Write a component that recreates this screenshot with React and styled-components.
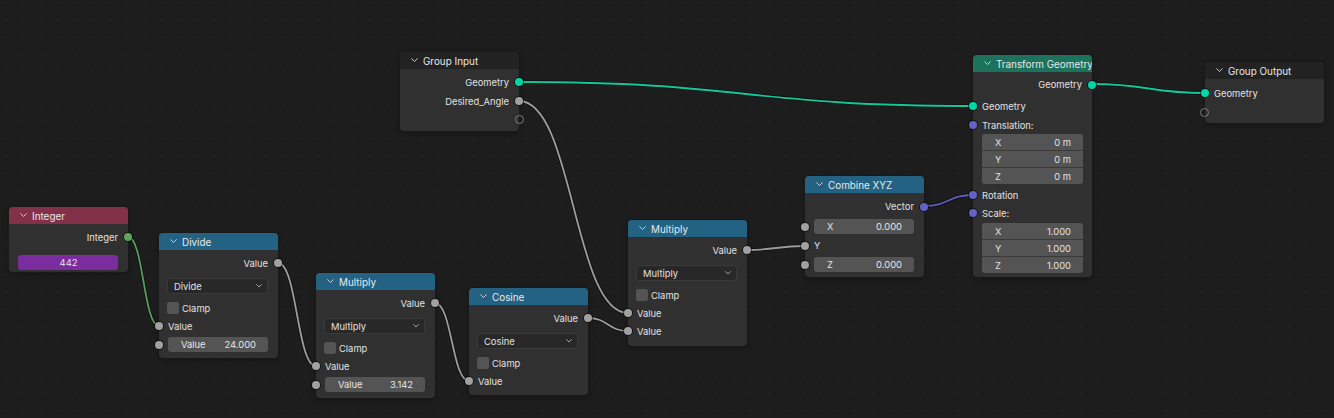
import React from "react";
import styled, { createGlobalStyle } from "styled-components";

const GlobalStyle = createGlobalStyle`
  html, body {
    margin: 0;
    padding: 0;
    background: #1d1d1d;
  }
  body {
    font-family: Inter, "Noto Sans", "DejaVu Sans", sans-serif;
    -webkit-font-smoothing: antialiased;
  }
`;

const SOCKET = {
  float: "#a1a1a1",
  int: "#5fa55f",
  geo: "#00d6a3",
  vec: "#6363c7",
};

const LINK = {
  float: "#9c9c9c",
  int: "#5a9a5a",
  geo: "#14c79a",
  vec: "#5e5ec0",
};

const Canvas = styled.div`
  position: relative;
  width: 1334px;
  height: 418px;
  overflow: hidden;
  background-color: #1d1d1d;
  background-image: radial-gradient(circle, #272727 0.9px, transparent 1.1px);
  background-size: 17.33px 17px;
  background-position: -2.6px -5.5px;
`;

const Wires = styled.svg`
  position: absolute;
  left: 0;
  top: 0;
`;

const Node = styled.div`
  position: absolute;
  left: ${(p) => p.$x}px;
  top: ${(p) => p.$y}px;
  width: 119px;
  background: #303030;
  border-radius: 4px;
  box-shadow: 0 0 0 1px #191919, 0 2px 5px rgba(0, 0, 0, 0.35);
  padding-bottom: ${(p) => p.$pb || 0}px;
  color: #e2e2e2;
  font-size: 9.4px;
`;

const Header = styled.div`
  height: 17px;
  display: flex;
  align-items: center;
  gap: 5px;
  padding-left: 11px;
  background: ${(p) => p.$color};
  border-radius: 4px 4px 0 0;
  font-size: 9.9px;
  color: #e8e8e8;
  margin-bottom: 3px;
  white-space: nowrap;
  overflow: hidden;

  svg {
    flex-shrink: 0;
  }
`;

const Row = styled.div`
  position: relative;
  height: ${(p) => p.$h}px;
  display: flex;
  align-items: center;
  justify-content: ${(p) => (p.$out ? "flex-end" : "flex-start")};
  padding: 0 10px 0 9px;
`;

const FieldRow = styled.div`
  position: relative;
  height: ${(p) => p.$h}px;
  display: flex;
  align-items: ${(p) => (p.$bottom ? "flex-end" : "center")};
  padding: 0 10px 0 9px;
  padding-bottom: ${(p) => (p.$bottom ? 2 : 0)}px;
`;

const Socket = styled.span`
  position: absolute;
  top: 50%;
  ${(p) => (p.$out ? `right: ${p.$hollow ? -5 : -4}px;` : `left: ${p.$hollow ? -5 : -4}px;`)}
  width: ${(p) => (p.$hollow ? 9 : 8)}px;
  height: ${(p) => (p.$hollow ? 9 : 8)}px;
  margin-top: ${(p) => (p.$hollow ? -4.5 : -4)}px;
  border-radius: 50%;
  box-sizing: border-box;
  background: ${(p) => (p.$hollow ? "transparent" : p.$color)};
  border: ${(p) => (p.$hollow ? "1.3px solid #7d7d7d" : "none")};
  box-shadow: ${(p) => (p.$hollow ? "none" : "0 0 0 1px rgba(0,0,0,0.55)")};
`;

const Field = styled.div`
  flex: 1;
  height: 15px;
  border-radius: 3px;
  background: ${(p) => p.$bg || "#545454"};
  display: flex;
  align-items: center;
  justify-content: ${(p) => (p.$center ? "center" : "space-between")};
  padding: 0 12px 0 13px;
  color: #e6e6e6;
`;

const Dropdown = styled.div`
  flex: 1;
  height: 16px;
  margin-left: -1px;
  box-sizing: border-box;
  border-radius: 3px;
  background: #282828;
  border: 1px solid #3a3a3a;
  display: flex;
  align-items: center;
  justify-content: space-between;
  padding: 0 5px 0 6px;
`;

const Check = styled.span`
  width: 12px;
  height: 12px;
  margin-left: -1px;
  border-radius: 2px;
  background: #545454;
  margin-right: 3px;
`;

const VectorBlock = styled.div`
  margin: ${(p) => p.$mt}px 9px 0 9px;
  border-radius: 3px;
  overflow: hidden;
  display: flex;
  flex-direction: column;
  gap: 1px;
  background: #3a3a3a;
`;

const VectorCell = styled.div`
  height: 16px;
  background: #545454;
  display: flex;
  align-items: center;
  justify-content: space-between;
  padding: 0 12px 0 13px;
`;

const Chevron = ({ size = 7, color = "#d0d0d0" }) => (
  <svg width={size} height={size * 0.6} viewBox="0 0 10 6">
    <polyline
      points="1,1 5,5 9,1"
      fill="none"
      stroke={color}
      strokeWidth="1.4"
      strokeLinecap="round"
      strokeLinejoin="round"
    />
  </svg>
);

const Title = ({ color, children }) => (
  <Header $color={color}>
    <Chevron />
    <span>{children}</span>
  </Header>
);

const Out = ({ h = 20, type = "float", children }) => (
  <Row $h={h} $out>
    {children}
    <Socket $out $color={SOCKET[type]} />
  </Row>
);

const In = ({ h = 18, type = "float", children }) => (
  <Row $h={h}>
    {children}
    <Socket $color={SOCKET[type]} />
  </Row>
);

const ValueIn = ({ label, value, h = 19 }) => (
  <FieldRow $h={h}>
    <Socket $color={SOCKET.float} />
    <Field>
      <span>{label}</span>
      <span>{value}</span>
    </Field>
  </FieldRow>
);

const Select = ({ label }) => (
  <Row $h={26}>
    <Dropdown>
      <span>{label}</span>
      <Chevron size={6} color="#bdbdbd" />
    </Dropdown>
  </Row>
);

const Clamp = () => (
  <Row $h={18}>
    <Check />
    <span>Clamp</span>
  </Row>
);

const Vector = ({ mt, values }) => (
  <VectorBlock $mt={mt}>
    {["X", "Y", "Z"].map((axis, i) => (
      <VectorCell key={axis}>
        <span>{axis}</span>
        <span>{values[i]}</span>
      </VectorCell>
    ))}
  </VectorBlock>
);

const MATH = "#246283";

const links = [
  { type: "int", a: [128, 237], b: [159, 326] },
  { type: "float", a: [278, 263], b: [316, 366] },
  { type: "float", a: [435, 303], b: [469, 381] },
  { type: "float", a: [519, 101], b: [628, 313] },
  { type: "float", a: [588, 318], b: [628, 331] },
  { type: "float", a: [747, 250], b: [805, 246] },
  { type: "vec", a: [924, 206], b: [973, 195] },
  { type: "geo", a: [519, 82], b: [973, 106] },
  { type: "geo", a: [1092, 84], b: [1205, 93] },
];

const curve = ([x0, y0], [x1, y1]) => {
  const d = Math.abs(x1 - x0) * 0.5;
  return `M${x0} ${y0} C${x0 + d} ${y0} ${x1 - d} ${y1} ${x1} ${y1}`;
};

export default function App() {
  return (
    <>
      <GlobalStyle />
      <Canvas>
        <Wires width="1334" height="418">
          {links.map((l, i) => (
            <g key={i}>
              <path d={curve(l.a, l.b)} fill="none" stroke="rgba(0,0,0,0.45)" strokeWidth="3.6" />
              <path d={curve(l.a, l.b)} fill="none" stroke={LINK[l.type]} strokeWidth="1.8" />
            </g>
          ))}
        </Wires>

        <Node $x={9} $y={207}>
          <Title color="#83314a">Integer</Title>
          <Out type="int">Integer</Out>
          <FieldRow $h={23} $bottom>
            <Field $bg="#7b2d9f" $center>442</Field>
          </FieldRow>
        </Node>

        <Node $x={159} $y={233} $pb={4}>
          <Title color={MATH}>Divide</Title>
          <Out>Value</Out>
          <Select label="Divide" />
          <Clamp />
          <In>Value</In>
          <ValueIn label="Value" value="24.000" />
        </Node>

        <Node $x={316} $y={273} $pb={4}>
          <Title color={MATH}>Multiply</Title>
          <Out>Value</Out>
          <Select label="Multiply" />
          <Clamp />
          <In>Value</In>
          <ValueIn label="Value" value="3.142" />
        </Node>

        <Node $x={469} $y={288} $pb={5}>
          <Title color={MATH}>Cosine</Title>
          <Out>Value</Out>
          <Select label="Cosine" />
          <Clamp />
          <In>Value</In>
        </Node>

        <Node $x={400} $y={52} $pb={3}>
          <Title color="#222222">Group Input</Title>
          <Out type="geo">Geometry</Out>
          <Out h={18}>Desired_Angle</Out>
          <Row $h={18} $out>
            <Socket $out $hollow />
          </Row>
        </Node>

        <Node $x={628} $y={220} $pb={6}>
          <Title color={MATH}>Multiply</Title>
          <Out>Value</Out>
          <Select label="Multiply" />
          <Clamp />
          <In>Value</In>
          <In>Value</In>
        </Node>

        <Node $x={805} $y={176} $pb={3}>
          <Title color={MATH}>Combine XYZ</Title>
          <Out h={21} type="vec">Vector</Out>
          <ValueIn label="X" value="0.000" />
          <In h={19}>Y</In>
          <ValueIn label="Z" value="0.000" />
        </Node>

        <Node $x={973} $y={55} $pb={4}>
          <Title color="#1d725d">Transform Geometry</Title>
          <Out h={19} type="geo">Geometry</Out>
          <In h={24} type="geo">Geometry</In>
          <In h={14} type="vec">Translation:</In>
          <Vector mt={2} values={["0 m", "0 m", "0 m"]} />
          <In h={22} type="vec">Rotation</In>
          <In h={14} type="vec">Scale:</In>
          <Vector mt={3} values={["1.000", "1.000", "1.000"]} />
        </Node>

        <Node $x={1205} $y={62} $pb={3}>
          <Title color="#222222">Group Output</Title>
          <In h={22} type="geo">Geometry</In>
          <Row $h={16}>
            <Socket $hollow />
          </Row>
        </Node>
      </Canvas>
    </>
  );
}
